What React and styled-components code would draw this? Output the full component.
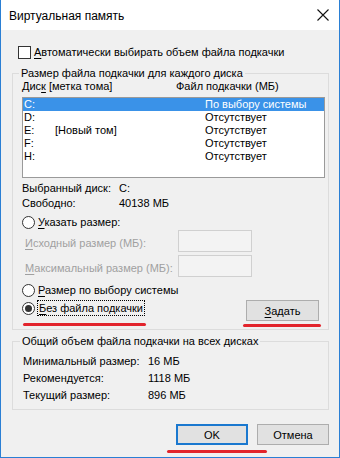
import React from 'react';
import styled, { createGlobalStyle } from 'styled-components';

const GlobalStyle = createGlobalStyle`
  html, body {
    margin: 0;
    padding: 0;
    background: #f0f0f0;
  }
  * {
    box-sizing: border-box;
  }
`;

const Window = styled.div`
  width: 340px;
  height: 458px;
  display: flex;
  flex-direction: column;
  background: #f0f0f0;
  border: 1px solid #2a7fd4;
  border-top: none;
  font-family: 'Liberation Sans', Arial, sans-serif;
  font-size: 11px;
  color: #000;
  white-space: nowrap;
  overflow: hidden;
`;

const TitleBar = styled.div`
  height: 30px;
  flex: none;
  display: flex;
  align-items: center;
  justify-content: space-between;
  padding: 0 8px 0 8px;
  background: #fff;
`;

const Title = styled.span`
  font-size: 12px;
  line-height: 16px;
  padding-top: 1px;
`;

const CloseButton = styled.span`
  display: flex;
  width: 14px;
  height: 14px;
  margin-right: 1px;
`;

const Body = styled.div`
  flex: 1;
  display: flex;
  flex-direction: column;
  padding: 14px 10px 0 11px;
`;

const CheckRow = styled.label`
  display: flex;
  align-items: center;
  gap: 3px;
  height: 16px;
  padding-left: 6px;
  line-height: 16px;
`;

const CheckBox = styled.span`
  width: 13px;
  height: 13px;
  flex: none;
  border: 1px solid #333;
  background: #fff;
`;

const Group = styled.fieldset`
  margin: ${p => p.$top}px 0 0 0;
  padding: 0 ${p => p.$right}px ${p => p.$bottom}px ${p => p.$left}px;
  border: 1px solid #dcdcdc;
  min-width: 0;
`;

const Legend = styled.legend`
  padding: 0 2px;
  margin-left: -3px;
  line-height: 14px;
`;

const Key = styled.span`
  text-decoration: underline;
  text-underline-offset: 2px;
`;

const ListHeader = styled.div`
  display: grid;
  grid-template-columns: 154px 1fr;
  line-height: 14px;
  margin-top: -1px;
`;

const ListBox = styled.div`
  margin-top: 4px;
  height: 81px;
  border: 1px solid #9a9a9a;
  background: #fff;
`;

const ListRow = styled.div`
  display: grid;
  grid-template-columns: 31px 150px 1fr;
  height: 13px;
  line-height: 13px;
  padding-left: 1px;
  background: ${p => (p.$selected ? '#3a92e8' : 'transparent')};
  color: ${p => (p.$selected ? '#fff' : '#000')};
`;

const InfoGrid = styled.div`
  display: grid;
  grid-template-columns: ${p => p.$col}px 1fr;
  line-height: ${p => p.$line}px;
  margin-top: ${p => p.$top}px;
  padding-left: ${p => p.$pad || 0}px;
`;

const RadioRow = styled.label`
  position: relative;
  display: flex;
  align-items: center;
  gap: 3px;
  height: 16px;
  line-height: 16px;
  margin-top: ${p => p.$top}px;
`;

const Radio = styled.span`
  position: relative;
  width: 13px;
  height: 13px;
  flex: none;
  border: 1px solid #333;
  border-radius: 50%;
  background: #fff;

  &::after {
    content: '';
    display: ${p => (p.$checked ? 'block' : 'none')};
    position: absolute;
    left: 2px;
    top: 2px;
    width: 7px;
    height: 7px;
    border-radius: 50%;
    background: #333;
  }
`;

const Focused = styled.span`
  outline: 1px dotted #000;
  outline-offset: 0;
  padding: 0 1px;
  line-height: 14px;
`;

const SizeRow = styled.div`
  display: grid;
  grid-template-columns: 153px 74px;
  align-items: center;
  margin-top: ${p => p.$top}px;
  padding-left: 3px;
  color: #a0a0a0;
`;

const SizeLabel = styled.span`
  padding-top: 3px;
`;

const SizeInput = styled.span`
  height: 22px;
  border: 1px solid #d0d0d0;
  background: #f3f3f3;
`;

const BottomRow = styled.div`
  display: flex;
  justify-content: space-between;
  align-items: flex-start;
  margin-top: 2px;
  padding-right: 6px;
`;

const Marked = styled.span`
  position: relative;
  display: inline-flex;
`;

const Mark = styled.span`
  position: absolute;
  left: ${p => p.$left}px;
  top: ${p => p.$top}px;
  width: ${p => p.$width}px;
  height: 3px;
  border-radius: 2px;
  background: #e2242c;
`;

const Button = styled.button`
  width: ${p => p.$width}px;
  height: 21px;
  padding: 0;
  font: inherit;
  color: #000;
  background: #e1e1e1;
  border: ${p => (p.$default ? '2px solid #1a78cf' : '1px solid #adadad')};
`;

const Footer = styled.div`
  display: flex;
  justify-content: flex-end;
  gap: 9px;
  margin-top: 14px;
`;

const rows = [
  { disk: 'C:', label: '', value: 'По выбору системы', selected: true },
  { disk: 'D:', label: '', value: 'Отсутствует' },
  { disk: 'E:', label: '[Новый том]', value: 'Отсутствует' },
  { disk: 'F:', label: '', value: 'Отсутствует' },
  { disk: 'H:', label: '', value: 'Отсутствует' },
];

const totals = [
  ['Минимальный размер:', '16 МБ'],
  ['Рекомендуется:', '1118 МБ'],
  ['Текущий размер:', '896 МБ'],
];

export default function App() {
  return (
    <>
      <GlobalStyle />
      <Window>
        <TitleBar>
          <Title>Виртуальная память</Title>
          <CloseButton>
            <svg width="14" height="14" viewBox="0 0 14 14">
              <path d="M1.5 1.5 L12.5 12.5 M12.5 1.5 L1.5 12.5" stroke="#111" strokeWidth="1.1" fill="none" />
            </svg>
          </CloseButton>
        </TitleBar>
        <Body>
          <CheckRow>
            <CheckBox />
            <span><Key>А</Key>втоматически выбирать объем файла подкачки</span>
          </CheckRow>

          <Group $top={6} $left={9} $right={3} $bottom={8}>
            <Legend>Размер файла подкачки для каждого диска</Legend>
            <ListHeader>
              <span>Дис<Key>к</Key> [метка тома]</span>
              <span>Файл подкачки (МБ)</span>
            </ListHeader>
            <ListBox>
              {rows.map(r => (
                <ListRow key={r.disk} $selected={r.selected}>
                  <span>{r.disk}</span>
                  <span>{r.label}</span>
                  <span>{r.value}</span>
                </ListRow>
              ))}
            </ListBox>
            <InfoGrid $col={97} $line={15} $top={3}>
              <span>Выбранный диск:</span>
              <span>C:</span>
              <span>Свободно:</span>
              <span>40138 МБ</span>
            </InfoGrid>
            <RadioRow $top={3}>
              <Radio />
              <span><Key>У</Key>казать размер:</span>
            </RadioRow>
            <SizeRow $top={0}>
              <SizeLabel><Key>И</Key>сходный размер (МБ):</SizeLabel>
              <SizeInput />
            </SizeRow>
            <SizeRow $top={3}>
              <SizeLabel><Key>М</Key>аксимальный размер (МБ):</SizeLabel>
              <SizeInput />
            </SizeRow>
            <RadioRow $top={5}>
              <Radio />
              <span><Key>Р</Key>азмер по выбору системы</span>
            </RadioRow>
            <BottomRow>
              <RadioRow $top={0}>
                <Radio $checked />
                <Focused><Key>Б</Key>ез файла подкачки</Focused>
                <Mark $left={1} $top={23} $width={123} />
              </RadioRow>
              <Marked>
                <Button $width={73}><Key>З</Key>адать</Button>
                <Mark $left={-3} $top={24} $width={78} />
              </Marked>
            </BottomRow>
          </Group>

          <Group $top={4} $left={10} $right={3} $bottom={5}>
            <Legend>Общий объем файла подкачки на всех дисках</Legend>
            <InfoGrid $col={125} $line={17} $top={5}>
              {totals.map(([k, v]) => (
                <React.Fragment key={k}>
                  <span>{k}</span>
                  <span>{v}</span>
                </React.Fragment>
              ))}
            </InfoGrid>
          </Group>

          <Footer>
            <Marked>
              <Button $width={72} $default>OK</Button>
              <Mark $left={-9} $top={26} $width={100} />
            </Marked>
            <Button $width={72}>Отмена</Button>
          </Footer>
        </Body>
      </Window>
    </>
  );
}
